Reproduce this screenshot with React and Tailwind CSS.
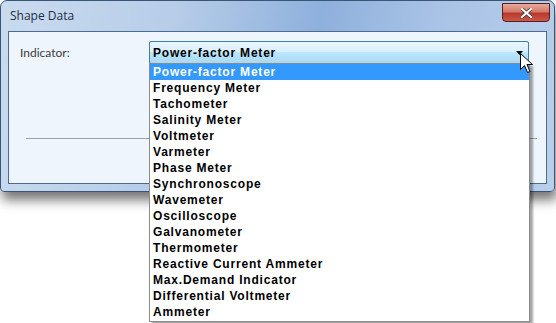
import React from "react";

const items = [
  "Power-factor Meter",
  "Frequency Meter",
  "Tachometer",
  "Salinity Meter",
  "Voltmeter",
  "Varmeter",
  "Phase Meter",
  "Synchronoscope",
  "Wavemeter",
  "Oscilloscope",
  "Galvanometer",
  "Thermometer",
  "Reactive Current Ammeter",
  "Max.Demand Indicator",
  "Differential Voltmeter",
  "Ammeter",
];

export default function App() {
  return (
    <div className="relative w-[556px] h-[323px] bg-white overflow-hidden">
      {/* Window */}
      <div className="w-[555px] h-[192px] rounded-t-[7px] rounded-b-[4px] border border-[#3a5676] bg-[linear-gradient(100deg,#c9dbef_0%,#b7cde8_30%,#8eb0dc_55%,#a9c3e6_75%,#b9cfea_100%)] shadow-[2px_8px_12px_rgba(0,0,0,0.55)] flex flex-col">
        {/* title bar */}
        <div className="h-[30px] flex items-start justify-between">
          <div className="pl-[9px] pt-[7px] text-[12px] leading-[16px] text-[#1e2f45] font-['Open_Sans',sans-serif]">
            Shape Data
          </div>
          <div className="mr-[4px] mt-[2px] w-[48px] h-[19px] rounded-b-[4px] border border-[#5a1e1e] bg-[linear-gradient(180deg,#e8a99a_0%,#d47a6a_45%,#b8382a_55%,#c8594a_100%)] flex items-center justify-center">
            <svg width="11" height="10" viewBox="0 0 11 10">
              <path d="M1 1 L10 9 M10 1 L1 9" stroke="#3a3a3a" strokeWidth="3.4" strokeLinecap="square" />
              <path d="M1 1 L10 9 M10 1 L1 9" stroke="#ffffff" strokeWidth="2" strokeLinecap="square" />
            </svg>
          </div>
        </div>
        {/* client area */}
        <div className="mx-[7px] h-[153px] border border-[#4d6b8f] bg-[#eef5fc] flex flex-col">
          <div className="flex items-start pt-[9px]">
            <div className="w-[140px] pl-[11px] pt-[4px] text-[12px] leading-[16px] text-[#3b3b3b] font-['Lato',sans-serif]">
              Indicator:
            </div>
            <div className="w-[380px] h-[23px] border border-[#3c7fb1] rounded-[2px] bg-[linear-gradient(180deg,#eaf6fd_0%,#d9f0fc_45%,#bee6fd_50%,#a7d9f5_100%)] flex items-center justify-between pl-[3px] pr-[5px]">
              <span className="text-[12px] font-bold tracking-[0.8px] text-black font-['Liberation_Sans',sans-serif]">
                Power-factor Meter
              </span>
              <svg width="7" height="4" viewBox="0 0 7 4">
                <path d="M0 0 H7 L3.5 4 Z" fill="#000" />
              </svg>
            </div>
          </div>
          <div className="mt-[74px] ml-[17px] mr-[9px] h-px bg-[#a0a0a0]" />
        </div>
      </div>

      {/* Dropdown list */}
      <div className="absolute left-[149px] top-[63px] w-[381px] h-[259px] bg-white border border-[#8a8a8a] shadow-[3px_3px_2px_rgba(0,0,0,0.35)] flex flex-col">
        {items.map((it, i) => (
          <div
            key={it}
            className={
              i === 0
                ? "h-[16px] leading-[16px] pl-[3px] bg-[#3399ff] text-white text-[12px] font-bold tracking-[0.8px] font-['Liberation_Sans',sans-serif]"
                : "h-[16px] leading-[16px] pl-[3px] text-black text-[12px] font-bold tracking-[0.8px] font-['Liberation_Sans',sans-serif]"
            }
          >
            {it}
          </div>
        ))}
      </div>

      {/* Cursor */}
      <svg className="absolute left-[520px] top-[53px]" width="14" height="22" viewBox="0 0 14 22">
        <path
          d="M0.5 0.5 L0.5 16.5 L4.5 12.5 L7.5 19.5 L10 18.5 L7 11.5 L12.5 11.5 Z"
          fill="#ffffff"
          stroke="#000000"
          strokeWidth="1"
          strokeLinejoin="miter"
        />
      </svg>
    </div>
  );
}
